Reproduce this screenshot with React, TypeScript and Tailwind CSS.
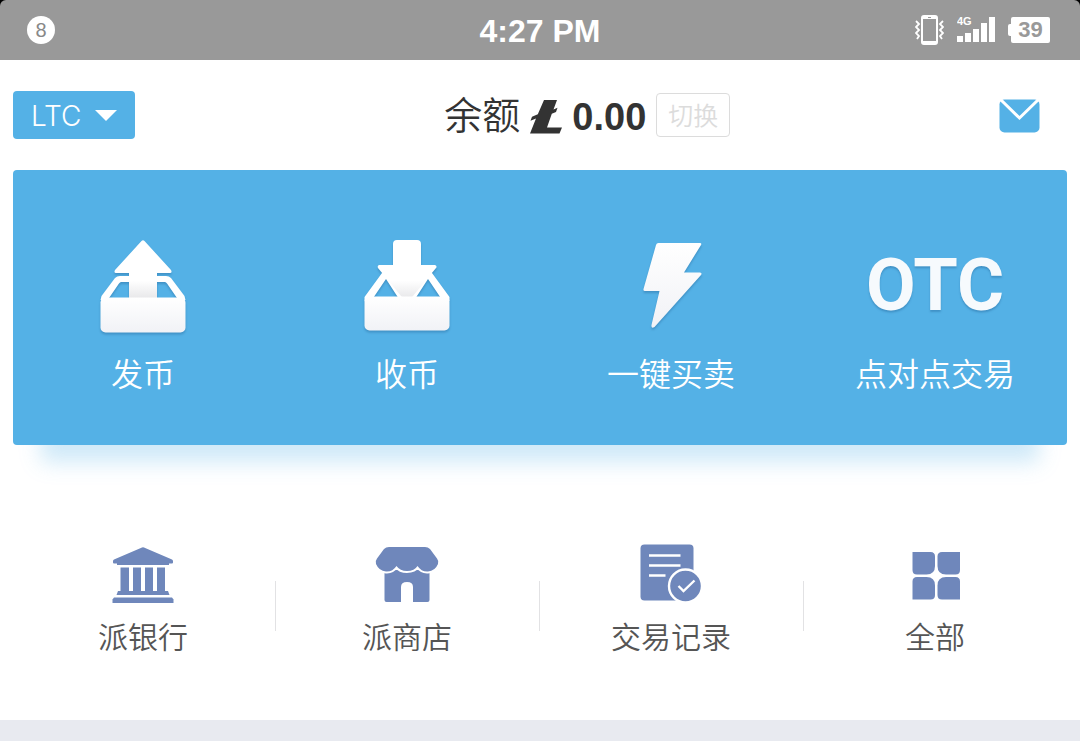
import type { ReactNode } from "react";

const CJK = "font-['Liberation_Sans','Noto_Sans_CJK_SC',sans-serif]";

function VibrateIcon() {
  return (
    <svg width="29" height="32" viewBox="0 0 29 32" fill="none" aria-hidden="true">
      <rect x="7" y="2" width="15" height="28" rx="2" stroke="#fff" strokeWidth="2" />
      <path d="M7 3.5h15M7 28.5h15" stroke="#fff" strokeWidth="3" />
      <path d="M13 3.5h3" stroke="#999" strokeWidth="1" />
      <path
        d="M1 7l3 3-3 3 3 3-3 3 3 3-2 3M28 7l-3 3 3 3-3 3 3 3-3 3 2 3"
        stroke="#fff"
        strokeWidth="1.8"
      />
    </svg>
  );
}

function SignalIcon() {
  return (
    <svg width="38" height="28" viewBox="0 0 38 28" fill="#fff" aria-hidden="true">
      <path d="M0 20h6v6H0zM8 17h6v9H8zM16 13h6v13h-6zM24 7h6v19h-6zM32 1h6v25h-6z" />
      <text x="0" y="9" fontSize="11" fontWeight="700" fontFamily="Liberation Sans, sans-serif">
        4G
      </text>
    </svg>
  );
}

function LitecoinIcon() {
  return (
    <svg width="32" height="34" viewBox="0 0 32 34" fill="#333" aria-hidden="true">
      <path d="M14 0H27L23.5 9.5L27.5 7.8L26 12L21.800 13.800L17 27.500H32L29.500 33.500H0L6 18.500L0.500 20.800L2 16.700L7.800 14.300Z" />
    </svg>
  );
}

function MailIcon() {
  return (
    <svg width="41" height="34" viewBox="0 0 41 34" fill="none" aria-hidden="true">
      <rect x="0.5" y="0.5" width="40" height="33" rx="5" fill="#54b1e6" />
      <path d="M2 1L20.5 19L39 1" stroke="#fff" strokeWidth="3" />
    </svg>
  );
}

function TileGradient({ id }: { id: string }) {
  return (
    <defs>
      <linearGradient id={id} x1="0" y1="0" x2="0" y2="1">
        <stop offset="0" stopColor="#fff" />
        <stop offset="1" stopColor="#f1f2f6" />
      </linearGradient>
      <linearGradient id={id + "-shaft"} x1="0" y1="0" x2="0" y2="1">
        <stop offset="0.7" stopColor="#fff" />
        <stop offset="1" stopColor="#e8e8ea" />
      </linearGradient>
    </defs>
  );
}

const tileIcon = "size-24 overflow-visible drop-shadow-[0_2px_1px_rgba(30,90,140,0.35)]";

function SendIcon() {
  return (
    <svg viewBox="0 0 96 96" className={tileIcon} aria-hidden="true">
      <TileGradient id="send" />
      <path
        fill="#fff"
        fillRule="evenodd"
        d="M5.5 62L6.5 58L20 40Q22 38 25 38H71Q74 38 76 40L89.500 58L90.500 62ZM14 60H34V44H26Q25 44 24 45.500ZM62 60H82L72 45.500Q71 44 70 44H62Z"
      />
      <path
        fill="url(#send-shaft)"
        d="M46.500 3Q48 1.500 49.500 3L76 32Q77.500 35 75 35H62V60H34V35H21Q18.500 35 20 32Z"
      />
      <rect x="5.5" y="59.500" width="85" height="35" rx="5" fill="url(#send)" />
    </svg>
  );
}

function ReceiveIcon() {
  return (
    <svg viewBox="0 0 96 96" className={tileIcon} aria-hidden="true">
      <TileGradient id="receive" />
      <path
        fill="#fff"
        fillRule="evenodd"
        d="M5.500 63V59L23 35H73L90.500 59V63ZM14.500 59.500H39L27 41ZM57 59.500H81.500L69 41Z"
      />
      <path
        fill="url(#receive-shaft)"
        d="M38 2H58Q62 2 62 6V27H76Q78.500 28 77 30L54 58Q53 60 50 60H46Q43 60 42 58L19 30Q18 28 20 27H34V6Q34 2 38 2Z"
      />
      <rect x="5.500" y="58.500" width="85" height="34" rx="5" fill="url(#receive)" />
    </svg>
  );
}

function BoltIcon() {
  return (
    <svg viewBox="0 0 96 96" className={tileIcon} aria-hidden="true">
      <TileGradient id="bolt" />
      <path
        fill="url(#bolt)"
        d="M35.500 5H77Q79 5 78 7L61 34.500H77Q79.500 35 78 37L31.500 89Q28 91 28.500 87L36.500 53H22Q20 53 20.500 51L33 7Q33.500 5 35.500 5Z"
      />
    </svg>
  );
}

function OtcMark() {
  return (
    <span className="flex h-24 items-center font-[Roboto,sans-serif] text-[72px] leading-none font-bold text-[#f6fafd] [text-shadow:0_2px_2px_rgba(30,90,140,0.35)]">
      OTC
    </span>
  );
}

const smallIcon = "h-[60px] w-16 overflow-visible";

function BankIcon() {
  return (
    <svg viewBox="0 0 64 60" fill="#6f87bb" className={smallIcon} aria-hidden="true">
      <path d="M31 2.500Q32 2 33 2.500L61 14.500Q62 15 62 16V17.500Q62 18.500 61 18.500H58V20H6V18.500H3Q2 18.500 2 17.500V16Q2 15 3 14.500Z" />
      <path d="M9.500 22.500H18V46H22V22.500H30V46H34V22.500H42V46H46V22.500H54V46H57L58.500 50H5.500L7 46H9.500Z" />
      <path d="M3 52.500H61L62.500 54.500V58H1.500V54.500Z" />
    </svg>
  );
}

function ShopIcon() {
  return (
    <svg viewBox="0 0 64 60" fill="#6f87bb" className={smallIcon} aria-hidden="true">
      <path d="M9.500 25V55Q9.500 57 11.500 57H26V42Q26 37 32 37Q38 37 38 42V57H52.500Q54.500 57 54.500 55V25Z" />
      <path
        stroke="#fff"
        strokeWidth="4"
        paintOrder="stroke"
        d="M14 2H50Q53 2 55 4L62 13.500Q64 16 63 19Q60 26 53 26.500Q46.500 27 42.500 21Q39.500 26 32 26Q25 26 21.500 21Q17.500 27 11 26.500Q4 26 1 19Q0 16 2 13.500L9 4Q11 2 14 2Z"
      />
    </svg>
  );
}

function RecordIcon() {
  return (
    <svg viewBox="0 0 64 60" fill="none" className={smallIcon} aria-hidden="true">
      <rect x="1.500" y="-0.500" width="53" height="56" rx="4" fill="#6f87bb" />
      <path d="M10 10.500H41.500M10 20.500H41.500M10 30.500H26.500" stroke="#fff" strokeWidth="2.400" />
      <circle cx="46.500" cy="41" r="16.500" fill="#6f87bb" stroke="#fff" strokeWidth="2.400" />
      <path d="M39.500 41L44.500 46L55.500 35.500" stroke="#fff" strokeWidth="2.400" />
    </svg>
  );
}

function AllIcon() {
  return (
    <svg viewBox="0 0 64 60" fill="#6f87bb" className={smallIcon} aria-hidden="true">
      <path d="M9.500 7H27.500Q32 7 32 11.500V21Q32 29.500 23.500 29.500H14Q9.500 29.500 9.500 25Z" />
      <path d="M57 7H39Q34.500 7 34.500 11.500V21Q34.500 29.500 43 29.500H52.500Q57 29.500 57 25Z" />
      <path d="M9.500 54.500H27.500Q32 54.500 32 50V40.500Q32 32 23.500 32H14Q9.500 32 9.500 36.500Z" />
      <path d="M57 54.500H39Q34.500 54.500 34.500 50V40.500Q34.500 32 43 32H52.500Q57 32 57 36.500Z" />
    </svg>
  );
}

function Tile({ icon, label }: { icon: ReactNode; label: string }) {
  return (
    <button type="button" className="flex flex-col items-center gap-4 text-white">
      {icon}
      <span className="text-[32px] leading-[50px] font-[350]">{label}</span>
    </button>
  );
}

function Shortcut({ icon, label }: { icon: ReactNode; label: string }) {
  return (
    <button type="button" className="flex min-w-0 flex-1 flex-col items-center gap-3 pb-2">
      {icon}
      <span className="text-[30px] leading-[42px] font-[350] text-[#555]">{label}</span>
    </button>
  );
}

function Divider() {
  return <span className="-mr-px h-[50px] w-px bg-[#e2e2e4]" />;
}

export default function App() {
  return (
    <div lang="zh-CN" className={`min-h-screen bg-[#e8eaf0] ${CJK}`}>
      <div className="bg-black">
        <header className="grid h-[60px] grid-cols-[1fr_auto_1fr] items-center rounded-t-md bg-[#999] px-[27px] text-white">
          <span className="flex size-7 items-center justify-center rounded-full bg-white text-[20px] leading-none text-[#888]">
            8
          </span>
          <time className="pt-0.5 text-[32px] leading-none font-bold">4:27 PM</time>
          <div className="flex items-center justify-end gap-[13px] pr-[3px]">
            <VibrateIcon />
            <SignalIcon />
            <span className="flex items-center">
              <span className="h-3 w-[3px] rounded-l-xs bg-white" />
              <span className="flex h-[26px] w-[39px] items-center justify-center rounded-xs bg-white text-[22px] leading-none font-bold text-[#999]">
                39
              </span>
            </span>
          </div>
        </header>
      </div>

      <main className="bg-white">
        <div className="grid h-[110px] grid-cols-[42%_auto_1fr] items-center pr-10 pl-[13px]">
          <button
            type="button"
            className="flex h-12 w-[122px] items-center justify-between rounded bg-[#54b1e6] px-[18px] text-white"
          >
            <span className="pt-0.5 font-[Inter,sans-serif] text-[28px] leading-none font-light">LTC</span>
            <svg width="22" height="11" viewBox="0 0 22 11" fill="#fff" aria-hidden="true">
              <path d="M0 0H22L11 11Z" />
            </svg>
          </button>
          <div className="flex items-center gap-[10px] text-[38px] leading-none text-[#333]">
            <span className="pt-0.5 font-[350]">余额</span>
            <span className="pt-1">
              <LitecoinIcon />
            </span>
            <span className="pt-1 font-bold">0.00</span>
            <button
              type="button"
              className="flex h-11 w-[74px] items-center justify-center rounded border border-[#dcdcdc] pt-0.5 text-[25px] leading-none font-[350] text-[#dcdcdc]"
            >
              切换
            </button>
          </div>
          <button type="button" aria-label="消息" className="justify-self-end pt-0.5">
            <MailIcon />
          </button>
        </div>

        <section className="mx-[13px] rounded bg-[#54b1e6] pt-[68px] pb-[45px] shadow-[0_45px_20px_-28px_rgba(84,177,230,0.28)]">
          <div className="-ml-0.5 grid grid-cols-4">
            <Tile icon={<SendIcon />} label="发币" />
            <Tile icon={<ReceiveIcon />} label="收币" />
            <Tile icon={<BoltIcon />} label="一键买卖" />
            <Tile icon={<OtcMark />} label="点对点交易" />
          </div>
        </section>

        <nav className="flex items-center pt-[100px] pr-[13px] pb-[53px] pl-[11px]">
          <Shortcut icon={<BankIcon />} label="派银行" />
          <Divider />
          <Shortcut icon={<ShopIcon />} label="派商店" />
          <Divider />
          <Shortcut icon={<RecordIcon />} label="交易记录" />
          <Divider />
          <Shortcut icon={<AllIcon />} label="全部" />
        </nav>
      </main>
    </div>
  );
}
